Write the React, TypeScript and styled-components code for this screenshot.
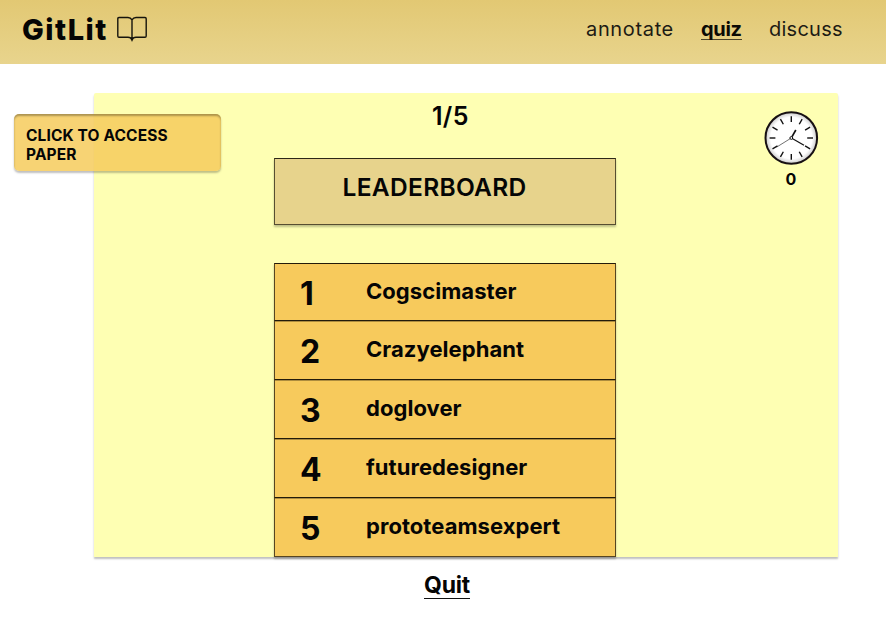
import React from "react";
import styled, { createGlobalStyle } from "styled-components";

const GlobalStyle = createGlobalStyle`
  * { box-sizing: border-box; }
  body {
    margin: 0;
    background: #fff;
    color: #050505;
    font-family: Inter, sans-serif;
    overflow: hidden;
  }
`;

const Page = styled.div`
  position: relative;
  width: 886px;
  height: 628px;
`;

const Header = styled.header`
  display: flex;
  align-items: flex-start;
  justify-content: space-between;
  height: 64px;
  padding: 14px 43px 0 22px;
  background: linear-gradient(#e2c873, #e8d48d);
`;

const Brand = styled.div`
  display: flex;
  gap: 9px;
`;

const BrandName = styled.span`
  width: 86px;
  font-size: 29px;
  font-weight: 800;
  line-height: 31px;
  letter-spacing: 1.5px;
  white-space: nowrap;
`;

const Nav = styled.nav`
  display: flex;
  gap: 27px;
`;

const NavItem = styled.a<{ $width: number; $active?: boolean; $spacing: number }>`
  width: ${(p) => p.$width}px;
  height: 26px;
  font-size: 20px;
  line-height: 31px;
  white-space: nowrap;
  letter-spacing: ${(p) => p.$spacing}px;
  font-weight: ${(p) => (p.$active ? 700 : 400)};
  color: ${(p) => (p.$active ? "#0b0a05" : "#1d1b14")};
  border-bottom: ${(p) => (p.$active ? "1.5px solid #4c4428" : "0")};
`;

const Panel = styled.main`
  display: grid;
  grid-template-columns: 342px 1fr;
  width: 744px;
  height: 464px;
  margin: 29px 0 0 94px;
  padding-left: 180px;
  border-radius: 2px 2px 0 0;
  background: #feffb3;
  box-shadow: 0 2px 2px rgba(0, 0, 0, 0.25);
`;

const Board = styled.section`
  display: flex;
  flex-direction: column;
`;

const Counter = styled.div`
  height: 65px;
  padding: 7px 0 0 158px;
  font-size: 25px;
  font-weight: 600;
  letter-spacing: 0.3px;
  line-height: 32px;
`;

const Title = styled.h1`
  height: 67px;
  margin: 0 0 38px;
  padding: 12px 0 0 67.5px;
  border: 1px solid #574e31;
  border-top-color: #2d2818;
  background: #e7d38c;
  box-shadow: 0 2px 2px rgba(0, 0, 0, 0.25);
  font-size: 24.5px;
  font-weight: 600;
  letter-spacing: 0.32px;
  line-height: 32px;
`;

const Ranking = styled.ol`
  display: grid;
  grid-template-rows: 57px 59px 59px 59px 60px;
  margin: 0;
  padding: 0;
  list-style: none;
  box-shadow: 0 2px 2px rgba(0, 0, 0, 0.25);
`;

const Row = styled.li`
  display: grid;
  grid-template-columns: 66px 1fr;
  padding: 10px 0 0 25px;
  border: 1px solid #574520;
  border-top-color: #231b0a;
  border-bottom-width: 0;
  background: #f7ca5c;

  & + & {
    box-shadow: inset 0 1px 0 rgba(35, 27, 10, 0.35);
  }

  &:first-child {
    padding-top: 9px;
  }

  &:last-child {
    border-bottom-width: 1px;
  }
`;

const Rank = styled.span`
  padding-top: 2px;
  font-size: 32px;
  font-weight: 700;
  line-height: 38px;
`;

const Player = styled.span`
  font-size: 22px;
  font-weight: 700;
  letter-spacing: 0.05px;
  line-height: 36px;
`;

const Timer = styled.aside`
  display: flex;
  flex-direction: column;
  align-items: center;
  width: 56px;
  margin: 17px 0 0 147px;
  font-size: 16px;
  font-weight: 700;
  line-height: 20px;

  svg {
    margin-bottom: 3px;
  }
`;

const AccessButton = styled.button`
  position: absolute;
  left: 14px;
  top: 114px;
  width: 207px;
  height: 57px;
  padding: 5px 36px 0 12px;
  border: 0;
  border-radius: 5px;
  background: rgba(246, 203, 92, 0.85);
  box-shadow: 0 2px 2px rgba(0, 0, 0, 0.25), inset 0 2px 2px rgba(0, 0, 0, 0.3);
  color: #050505;
  font: 700 15.5px/19px Inter, sans-serif;
  letter-spacing: 0.12px;
  text-align: left;
`;

const Footer = styled.footer`
  display: flex;
  justify-content: center;
  padding: 13px 0 0 8px;
`;

const Quit = styled.a`
  height: 29px;
  border-bottom: 1.5px solid #111;
  font-size: 23px;
  font-weight: 700;
  letter-spacing: -0.2px;
  line-height: 31px;
`;

const players = ["Cogscimaster", "Crazyelephant", "doglover", "futuredesigner", "prototeamsexpert"];

function BookIcon() {
  return (
    <svg width="30" height="28" viewBox="0 0 30 28" fill="none" stroke="#16140c" strokeWidth="1.4">
      <path d="M15 5.8Q13.6 3.5 11 3.5H2Q.8 3.5.8 4.7V22Q.8 23.2 2 23.2H11Q14 23.2 15 26Q16 23.2 19 23.2H28Q29.2 23.2 29.2 22V4.7Q29.2 3.5 28 3.5H19Q16.4 3.5 15 5.8V26" />
      <path d="M13.5 23.6h3L15 27z" fill="#16140c" stroke="none" />
    </svg>
  );
}

function ClockIcon() {
  return (
    <svg width="56" height="56" viewBox="0 0 56 56">
      <defs>
        <radialGradient id="clockFace">
          <stop offset="0.8" stopColor="#fff" />
          <stop offset="1" stopColor="#c9c9c9" />
        </radialGradient>
      </defs>
      <g transform="translate(0.8 0)">
        <circle cx="27.5" cy="28" r="25.8" fill="url(#clockFace)" stroke="#171012" strokeWidth="2" />
        <g stroke="#111" strokeWidth="1.4">
          {Array.from({ length: 12 }, (_, i) => (
            <path key={i} d="M27.5 6.3v5.8" transform={`rotate(${i * 30} 27.5 28)`} />
          ))}
        </g>
        <path d="M27.8 27.3 32 20" stroke="#111" strokeWidth="1.7" />
        <path d="m28 28.3 12.2 7" stroke="#111" strokeWidth="1.2" />
        <path d="M27 28.3 13 37" stroke="#333" strokeWidth="0.7" />
        <circle cx="27.5" cy="28" r="1.4" fill="#fff" stroke="#111" />
      </g>
    </svg>
  );
}

export default function App() {
  return (
    <Page>
      <GlobalStyle />
      <Header>
        <Brand>
          <BrandName>GitLit</BrandName>
          <BookIcon />
        </Brand>
        <Nav>
          <NavItem $width={88} $spacing={0.65}>annotate</NavItem>
          <NavItem $width={41} $spacing={-0.3} $active>quiz</NavItem>
          <NavItem $width={74} $spacing={0.25}>discuss</NavItem>
        </Nav>
      </Header>
      <Panel>
        <Board>
          <Counter>1/5</Counter>
          <Title>LEADERBOARD</Title>
          <Ranking>
            {players.map((name, i) => (
              <Row key={name}>
                <Rank>{i + 1}</Rank>
                <Player>{name}</Player>
              </Row>
            ))}
          </Ranking>
        </Board>
        <Timer>
          <ClockIcon />
          0
        </Timer>
      </Panel>
      <AccessButton>CLICK TO ACCESS PAPER</AccessButton>
      <Footer>
        <Quit>Quit</Quit>
      </Footer>
    </Page>
  );
}
